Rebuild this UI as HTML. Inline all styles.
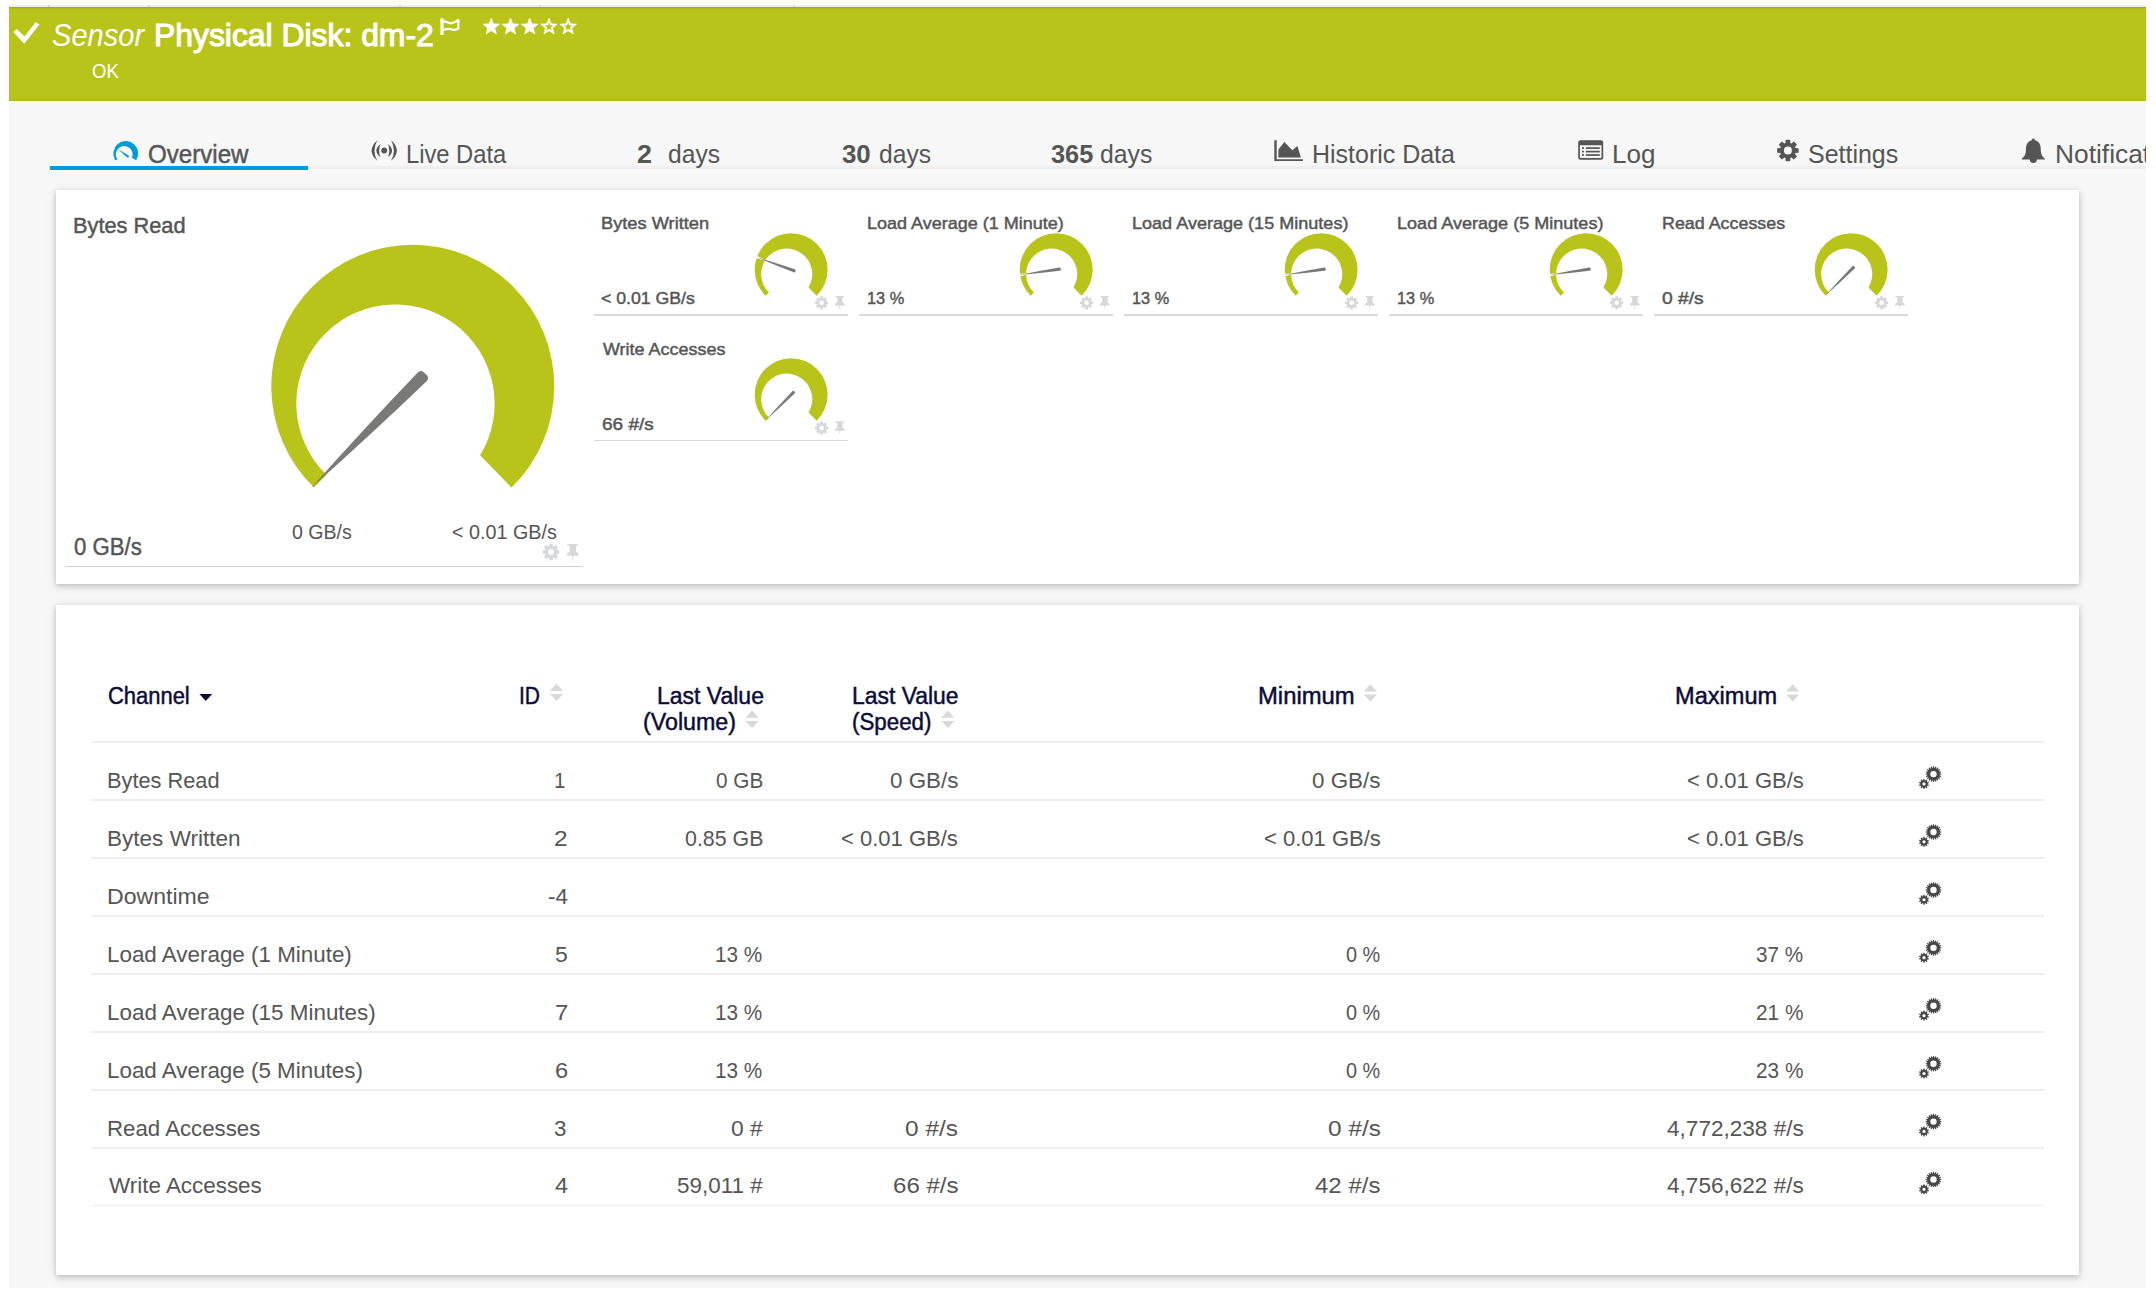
<!DOCTYPE html>
<html><head><meta charset="utf-8"><title>Sensor Physical Disk: dm-2</title>
<style>
html,body{margin:0;padding:0;background:#fff;}
body{width:2156px;height:1295px;position:relative;overflow:hidden;font-family:"Liberation Sans",sans-serif;}
#bg{position:absolute;left:9px;top:7px;width:2137px;height:1280.7px;background:#f7f7f7;}
#topline{position:absolute;left:9px;top:5px;width:2137px;height:2px;background:#f0f0f3;}
#hdr{position:absolute;left:9px;top:7px;width:2137px;height:94.3px;background:#b8c41a;box-shadow:inset 0 2px 2px -1px rgba(0,0,0,.18),inset 0 -1.4px 0 0 #b1be0e;}
#hwl{position:absolute;left:9px;top:102.0px;width:2137px;height:1.3px;background:#fcfcff;}
.tk{position:absolute;top:5px;width:2px;height:2px;background:#d9d9e6;}
#tabline{position:absolute;left:50px;top:166.3px;width:2096px;height:2.8px;background:#efefef;}
#tabsel{position:absolute;left:49.7px;top:166px;width:258.5px;height:3.7px;background:#009bda;}
.card{position:absolute;left:56.2px;width:2022.8px;background:#fff;box-shadow:0 2px 5px 0 rgba(0,0,0,.16),0 2px 10px 0 rgba(0,0,0,.12);}
#c1{top:189.8px;height:394px;}
#c2{top:604.8px;height:670.4px;}
.t{position:absolute;white-space:pre;line-height:1;transform-origin:0 0;}
.ul{position:absolute;height:1.9px;background:#d9dadc;}
.rl{position:absolute;left:91px;width:1953px;height:1.9px;background:#eeeeee;}
#hl{position:absolute;left:91px;width:1953px;top:741.0px;height:2px;background:#efefef;}
#clip{position:absolute;left:0;top:0;width:2146px;height:1295px;overflow:hidden;}
svg{position:absolute;left:0;top:0;}
</style></head><body>
<div id="bg"></div><div id="topline"></div><div id="hdr"></div><div id="hwl"></div>
<div class="tk" style="left:48px"></div><div class="tk" style="left:148px"></div><div class="tk" style="left:399px"></div><div class="tk" style="left:539px"></div><div class="tk" style="left:793px"></div>
<div id="tabline"></div><div id="tabsel"></div>
<div class="card" id="c1"></div><div class="card" id="c2"></div>
<div id="hl"></div>
<div class="ul" style="left:593.8px;top:314.0px;width:254.2px"></div>
<div class="ul" style="left:858.8px;top:314.0px;width:254.2px"></div>
<div class="ul" style="left:1123.8px;top:314.0px;width:254.2px"></div>
<div class="ul" style="left:1388.8px;top:314.0px;width:254.2px"></div>
<div class="ul" style="left:1653.8px;top:314.0px;width:254.2px"></div>
<div class="ul" style="left:593.8px;top:439.5px;width:254.2px"></div>
<div class="ul" style="left:65.0px;top:565.9px;width:517.9px;height:1.3px;background:#d0d1d3"></div>
<div class="rl" style="top:799.1px"></div>
<div class="rl" style="top:857.1px"></div>
<div class="rl" style="top:915.0px"></div>
<div class="rl" style="top:972.9px"></div>
<div class="rl" style="top:1030.8px"></div>
<div class="rl" style="top:1088.8px"></div>
<div class="rl" style="top:1146.7px"></div>
<div class="rl" style="top:1204.6px"></div>
<div id="clip">
<svg width="2146" height="1295" viewBox="0 0 2146 1295">
<path d="M13.3 31.9 L16.7 29.1 L24.5 36.5 L35.8 22.05 L39.5 24.6 L24.2 43.8 Z" fill="#fff"/>
<path d="M442.0 19.8 L442.0 34.9" stroke="#fff" stroke-width="3.2" fill="none" stroke-linecap="butt"/><circle cx="442" cy="19.9" r="1.9" fill="#fff"/>
<path d="M443.2 22.0 C446.5 20.6 448.6 23.8 451.8 23.2 C454.6 22.7 456.6 20.9 458.4 20.0 L458.4 28.4 C456.2 29.9 454.3 30.6 451.8 29.4 C448.8 28.0 446.4 28.8 443.2 30.0" fill="none" stroke="#fff" stroke-width="2.2" stroke-linejoin="round"/>
<path d="M491.20 18.20 L493.40 23.87 L499.47 24.21 L494.76 28.06 L496.31 33.94 L491.20 30.64 L486.09 33.94 L487.64 28.06 L482.93 24.21 L489.00 23.87Z" fill="#fff" stroke="#fff" stroke-width="0.7" stroke-linejoin="round"/>
<path d="M510.50 18.20 L512.70 23.87 L518.77 24.21 L514.06 28.06 L515.61 33.94 L510.50 30.64 L505.39 33.94 L506.94 28.06 L502.23 24.21 L508.30 23.87Z" fill="#fff" stroke="#fff" stroke-width="0.7" stroke-linejoin="round"/>
<path d="M529.70 18.20 L531.90 23.87 L537.97 24.21 L533.26 28.06 L534.81 33.94 L529.70 30.64 L524.59 33.94 L526.14 28.06 L521.43 24.21 L527.50 23.87Z" fill="#fff" stroke="#fff" stroke-width="0.7" stroke-linejoin="round"/>
<path d="M549.00 18.20 L551.20 23.87 L557.27 24.21 L552.56 28.06 L554.11 33.94 L549.00 30.64 L543.89 33.94 L545.44 28.06 L540.73 24.21 L546.80 23.87Z M549.00 21.47 L550.37 25.01 L554.16 25.22 L551.22 27.62 L552.19 31.29 L549.00 29.23 L545.81 31.29 L546.78 27.62 L543.84 25.22 L547.63 25.01Z" fill="#fff" fill-rule="evenodd" stroke="#fff" stroke-width="0.7" stroke-linejoin="round"/>
<path d="M568.20 18.20 L570.40 23.87 L576.47 24.21 L571.76 28.06 L573.31 33.94 L568.20 30.64 L563.09 33.94 L564.64 28.06 L559.93 24.21 L566.00 23.87Z M568.20 21.47 L569.57 25.01 L573.36 25.22 L570.42 27.62 L571.39 31.29 L568.20 29.23 L565.01 31.29 L565.98 27.62 L563.04 25.22 L566.83 25.01Z" fill="#fff" fill-rule="evenodd" stroke="#fff" stroke-width="0.7" stroke-linejoin="round"/>
<path d="M115.19 160.15 A12.45 12.45 0 1 1 136.19 160.33 L131.87 157.87 A8.4 8.4 0 1 0 117.40 159.39 Z" fill="#009bda"/>
<path d="M117.9 149.0 L128.6 155.4 A1.3 1.3 0 0 1 127.2 157.5 Z" fill="#009bda"/>
<circle cx="384.2" cy="150.5" r="2.9" fill="#555555"/>
<path d="M377.30 140.20 Q365.90 150.50 377.30 160.80 Q371.70 150.50 377.30 140.20Z" fill="#555555"/>
<path d="M380.40 143.90 Q372.30 150.50 380.40 157.10 Q377.86 150.50 380.40 143.90Z" fill="#555555"/>
<path d="M391.10 140.20 Q402.50 150.50 391.10 160.80 Q396.70 150.50 391.10 140.20Z" fill="#555555"/>
<path d="M388.00 143.90 Q396.10 150.50 388.00 157.10 Q390.54 150.50 388.00 143.90Z" fill="#555555"/>
<path d="M1274.3 140.2 H1276.7 V159.3 H1302.9 V160.9 H1274.3Z M1278.4 149.6 L1284.4 142 L1292.3 150.2 L1297.4 145.9 L1300.9 157.6 L1278.4 157.6Z" fill="#555555"/>
<path d="M1580.4 140.2 H1601 A2.2 2.2 0 0 1 1603.2 142.4 V157.5 A2.2 2.2 0 0 1 1601 159.7 H1580.4 A2.2 2.2 0 0 1 1578.2 157.5 V142.4 A2.2 2.2 0 0 1 1580.4 140.2Z M1579.9 145.3 V157.3 A0.8 0.8 0 0 0 1580.7 158.1 H1600.7 A0.8 0.8 0 0 0 1601.5 157.3 V145.3Z" fill="#555555" fill-rule="evenodd"/>
<rect x="1582" y="147.25" width="1.9" height="1.7" fill="#555555"/><rect x="1585.8" y="147.25" width="14" height="1.7" fill="#555555"/>
<rect x="1582" y="150.75" width="1.9" height="1.7" fill="#555555"/><rect x="1585.8" y="150.75" width="14" height="1.7" fill="#555555"/>
<rect x="1582" y="154.15" width="1.9" height="1.7" fill="#555555"/><rect x="1585.8" y="154.15" width="14" height="1.7" fill="#555555"/>
<path d="M1785.46 142.99 L1785.59 139.95 A10.80 10.80 0 0 1 1790.21 139.95 L1790.34 142.99 A7.90 7.90 0 0 1 1791.49 143.46 L1793.72 141.40 A10.80 10.80 0 0 1 1797.00 144.68 L1794.94 146.91 A7.90 7.90 0 0 1 1795.41 148.06 L1798.45 148.19 A10.80 10.80 0 0 1 1798.45 152.81 L1795.41 152.94 A7.90 7.90 0 0 1 1794.94 154.09 L1797.00 156.32 A10.80 10.80 0 0 1 1793.72 159.60 L1791.49 157.54 A7.90 7.90 0 0 1 1790.34 158.01 L1790.21 161.05 A10.80 10.80 0 0 1 1785.59 161.05 L1785.46 158.01 A7.90 7.90 0 0 1 1784.31 157.54 L1782.08 159.60 A10.80 10.80 0 0 1 1778.80 156.32 L1780.86 154.09 A7.90 7.90 0 0 1 1780.39 152.94 L1777.35 152.81 A10.80 10.80 0 0 1 1777.35 148.19 L1780.39 148.06 A7.90 7.90 0 0 1 1780.86 146.91 L1778.80 144.68 A10.80 10.80 0 0 1 1782.08 141.40 L1784.31 143.46 A7.90 7.90 0 0 1 1785.46 142.99Z M1791.90 150.50 A4.00 4.00 0 1 0 1783.90 150.50 A4.00 4.00 0 1 0 1791.90 150.50Z" fill="#555555" fill-rule="evenodd"/>
<path d="M2033.35 138.4 C2034.55 138.4 2034.9499999999998 139.4 2034.85 140.3 C2039.35 141.4 2040.75 145 2040.75 149 C2040.75 154 2041.9499999999998 156.4 2044.85 158.6 L2044.85 159.6 L2036.9499999999998 159.6 A3.6 3.4 0 0 1 2029.75 159.6 L2021.85 159.6 L2021.85 158.6 C2024.75 156.4 2025.9499999999998 154 2025.9499999999998 149 C2025.9499999999998 145 2027.35 141.4 2031.85 140.3 C2031.75 139.4 2032.1499999999999 138.4 2033.35 138.4Z" fill="#555555"/>
<path d="M313.92 487.57 A141.50 141.50 0 1 1 511.58 487.57 L480.07 455.28 A99.15 99.15 0 1 0 326.42 474.77 Z" fill="#b8c41a"/>
<path d="M310.57 488.48 Q372.23 433.46 426.36 381.53 Q429.76 378.13 426.57 374.95 L424.10 372.48 Q420.92 369.29 417.52 372.69 Q365.59 426.82 310.57 488.48 Z" fill="#797977"/>
<path d="M549.17 546.20 L549.28 543.89 A8.30 8.30 0 0 1 552.84 543.89 L552.95 546.20 A6.10 6.10 0 0 1 553.83 546.56 L555.53 545.01 A8.30 8.30 0 0 1 558.05 547.53 L556.50 549.23 A6.10 6.10 0 0 1 556.86 550.11 L559.17 550.22 A8.30 8.30 0 0 1 559.17 553.78 L556.86 553.89 A6.10 6.10 0 0 1 556.50 554.77 L558.05 556.47 A8.30 8.30 0 0 1 555.53 558.99 L553.83 557.44 A6.10 6.10 0 0 1 552.95 557.80 L552.84 560.11 A8.30 8.30 0 0 1 549.28 560.11 L549.17 557.80 A6.10 6.10 0 0 1 548.29 557.44 L546.59 558.99 A8.30 8.30 0 0 1 544.07 556.47 L545.62 554.77 A6.10 6.10 0 0 1 545.26 553.89 L542.95 553.78 A8.30 8.30 0 0 1 542.95 550.22 L545.26 550.11 A6.10 6.10 0 0 1 545.62 549.23 L544.07 547.53 A8.30 8.30 0 0 1 546.59 545.01 L548.29 546.56 A6.10 6.10 0 0 1 549.17 546.20Z M553.96 552.00 A2.90 2.90 0 1 0 548.16 552.00 A2.90 2.90 0 1 0 553.96 552.00Z" fill="#d7d8da" fill-rule="evenodd"/>
<path d="M567.20 544.10 L577.60 544.10 L577.60 545.60 L576.10 545.60 L576.10 551.70 C578.10 552.70 578.90 554.30 578.90 555.70 L573.40 555.70 L572.70 561.60 L572.00 555.70 L566.50 555.70 C566.50 554.30 567.30 552.70 569.60 551.70 L569.60 545.60 L567.20 545.60Z" fill="#d7d8da"/>
<path d="M765.67 295.81 A36.48 36.48 0 1 1 816.63 295.81 L808.50 287.48 A25.56 25.56 0 1 0 768.89 292.51 Z" fill="#b8c41a"/>
<path d="M754.33 257.81 L755.30 255.14 L768.00 260.94 L767.79 261.53Z" fill="#fff"/>
<path d="M756.14 256.96 Q775.72 265.37 793.75 272.36 Q794.91 272.78 795.31 271.69 L795.62 270.85 Q796.01 269.76 794.85 269.33 Q776.54 263.09 756.14 256.96 Z" fill="#797977"/>
<path d="M820.10 298.19 L820.19 296.35 A6.60 6.60 0 0 1 823.01 296.35 L823.10 298.19 A4.85 4.85 0 0 1 823.80 298.48 L825.16 297.24 A6.60 6.60 0 0 1 827.16 299.24 L825.92 300.60 A4.85 4.85 0 0 1 826.21 301.30 L828.05 301.39 A6.60 6.60 0 0 1 828.05 304.21 L826.21 304.30 A4.85 4.85 0 0 1 825.92 305.00 L827.16 306.36 A6.60 6.60 0 0 1 825.16 308.36 L823.80 307.12 A4.85 4.85 0 0 1 823.10 307.41 L823.01 309.25 A6.60 6.60 0 0 1 820.19 309.25 L820.10 307.41 A4.85 4.85 0 0 1 819.40 307.12 L818.04 308.36 A6.60 6.60 0 0 1 816.04 306.36 L817.28 305.00 A4.85 4.85 0 0 1 816.99 304.30 L815.15 304.21 A6.60 6.60 0 0 1 815.15 301.39 L816.99 301.30 A4.85 4.85 0 0 1 817.28 300.60 L816.04 299.24 A6.60 6.60 0 0 1 818.04 297.24 L819.40 298.48 A4.85 4.85 0 0 1 820.10 298.19Z M823.90 302.80 A2.30 2.30 0 1 0 819.30 302.80 A2.30 2.30 0 1 0 823.90 302.80Z" fill="#d7d8da" fill-rule="evenodd"/>
<path d="M835.27 296.00 L843.80 296.00 L843.80 297.23 L842.57 297.23 L842.57 302.23 C844.21 303.05 844.87 304.36 844.87 305.51 L840.36 305.51 L839.78 310.35 L839.21 305.51 L834.70 305.51 C834.70 304.36 835.36 303.05 837.24 302.23 L837.24 297.23 L835.27 297.23Z" fill="#d7d8da"/>
<path d="M1030.67 295.81 A36.48 36.48 0 1 1 1081.63 295.81 L1073.50 287.48 A25.56 25.56 0 1 0 1033.89 292.51 Z" fill="#b8c41a"/>
<path d="M1018.09 276.69 L1017.68 273.88 L1031.62 272.97 L1031.71 273.58Z" fill="#fff"/>
<path d="M1019.29 275.08 Q1040.51 273.21 1059.70 270.81 Q1060.92 270.63 1060.76 269.48 L1060.63 268.59 Q1060.46 267.44 1059.23 267.62 Q1040.16 270.81 1019.29 275.08 Z" fill="#797977"/>
<path d="M1085.10 298.19 L1085.19 296.35 A6.60 6.60 0 0 1 1088.01 296.35 L1088.10 298.19 A4.85 4.85 0 0 1 1088.80 298.48 L1090.16 297.24 A6.60 6.60 0 0 1 1092.16 299.24 L1090.92 300.60 A4.85 4.85 0 0 1 1091.21 301.30 L1093.05 301.39 A6.60 6.60 0 0 1 1093.05 304.21 L1091.21 304.30 A4.85 4.85 0 0 1 1090.92 305.00 L1092.16 306.36 A6.60 6.60 0 0 1 1090.16 308.36 L1088.80 307.12 A4.85 4.85 0 0 1 1088.10 307.41 L1088.01 309.25 A6.60 6.60 0 0 1 1085.19 309.25 L1085.10 307.41 A4.85 4.85 0 0 1 1084.40 307.12 L1083.04 308.36 A6.60 6.60 0 0 1 1081.04 306.36 L1082.28 305.00 A4.85 4.85 0 0 1 1081.99 304.30 L1080.15 304.21 A6.60 6.60 0 0 1 1080.15 301.39 L1081.99 301.30 A4.85 4.85 0 0 1 1082.28 300.60 L1081.04 299.24 A6.60 6.60 0 0 1 1083.04 297.24 L1084.40 298.48 A4.85 4.85 0 0 1 1085.10 298.19Z M1088.90 302.80 A2.30 2.30 0 1 0 1084.30 302.80 A2.30 2.30 0 1 0 1088.90 302.80Z" fill="#d7d8da" fill-rule="evenodd"/>
<path d="M1100.27 296.00 L1108.80 296.00 L1108.80 297.23 L1107.57 297.23 L1107.57 302.23 C1109.21 303.05 1109.87 304.36 1109.87 305.51 L1105.36 305.51 L1104.78 310.35 L1104.21 305.51 L1099.70 305.51 C1099.70 304.36 1100.36 303.05 1102.24 302.23 L1102.24 297.23 L1100.27 297.23Z" fill="#d7d8da"/>
<path d="M1295.67 295.81 A36.48 36.48 0 1 1 1346.63 295.81 L1338.50 287.48 A25.56 25.56 0 1 0 1298.89 292.51 Z" fill="#b8c41a"/>
<path d="M1283.09 276.69 L1282.68 273.88 L1296.62 272.97 L1296.71 273.58Z" fill="#fff"/>
<path d="M1284.29 275.08 Q1305.51 273.21 1324.70 270.81 Q1325.92 270.63 1325.76 269.48 L1325.63 268.59 Q1325.46 267.44 1324.23 267.62 Q1305.16 270.81 1284.29 275.08 Z" fill="#797977"/>
<path d="M1350.10 298.19 L1350.19 296.35 A6.60 6.60 0 0 1 1353.01 296.35 L1353.10 298.19 A4.85 4.85 0 0 1 1353.80 298.48 L1355.16 297.24 A6.60 6.60 0 0 1 1357.16 299.24 L1355.92 300.60 A4.85 4.85 0 0 1 1356.21 301.30 L1358.05 301.39 A6.60 6.60 0 0 1 1358.05 304.21 L1356.21 304.30 A4.85 4.85 0 0 1 1355.92 305.00 L1357.16 306.36 A6.60 6.60 0 0 1 1355.16 308.36 L1353.80 307.12 A4.85 4.85 0 0 1 1353.10 307.41 L1353.01 309.25 A6.60 6.60 0 0 1 1350.19 309.25 L1350.10 307.41 A4.85 4.85 0 0 1 1349.40 307.12 L1348.04 308.36 A6.60 6.60 0 0 1 1346.04 306.36 L1347.28 305.00 A4.85 4.85 0 0 1 1346.99 304.30 L1345.15 304.21 A6.60 6.60 0 0 1 1345.15 301.39 L1346.99 301.30 A4.85 4.85 0 0 1 1347.28 300.60 L1346.04 299.24 A6.60 6.60 0 0 1 1348.04 297.24 L1349.40 298.48 A4.85 4.85 0 0 1 1350.10 298.19Z M1353.90 302.80 A2.30 2.30 0 1 0 1349.30 302.80 A2.30 2.30 0 1 0 1353.90 302.80Z" fill="#d7d8da" fill-rule="evenodd"/>
<path d="M1365.27 296.00 L1373.80 296.00 L1373.80 297.23 L1372.57 297.23 L1372.57 302.23 C1374.21 303.05 1374.87 304.36 1374.87 305.51 L1370.36 305.51 L1369.78 310.35 L1369.21 305.51 L1364.70 305.51 C1364.70 304.36 1365.36 303.05 1367.24 302.23 L1367.24 297.23 L1365.27 297.23Z" fill="#d7d8da"/>
<path d="M1560.67 295.81 A36.48 36.48 0 1 1 1611.63 295.81 L1603.50 287.48 A25.56 25.56 0 1 0 1563.89 292.51 Z" fill="#b8c41a"/>
<path d="M1548.09 276.69 L1547.68 273.88 L1561.62 272.97 L1561.71 273.58Z" fill="#fff"/>
<path d="M1549.29 275.08 Q1570.51 273.21 1589.70 270.81 Q1590.92 270.63 1590.76 269.48 L1590.63 268.59 Q1590.46 267.44 1589.23 267.62 Q1570.16 270.81 1549.29 275.08 Z" fill="#797977"/>
<path d="M1615.10 298.19 L1615.19 296.35 A6.60 6.60 0 0 1 1618.01 296.35 L1618.10 298.19 A4.85 4.85 0 0 1 1618.80 298.48 L1620.16 297.24 A6.60 6.60 0 0 1 1622.16 299.24 L1620.92 300.60 A4.85 4.85 0 0 1 1621.21 301.30 L1623.05 301.39 A6.60 6.60 0 0 1 1623.05 304.21 L1621.21 304.30 A4.85 4.85 0 0 1 1620.92 305.00 L1622.16 306.36 A6.60 6.60 0 0 1 1620.16 308.36 L1618.80 307.12 A4.85 4.85 0 0 1 1618.10 307.41 L1618.01 309.25 A6.60 6.60 0 0 1 1615.19 309.25 L1615.10 307.41 A4.85 4.85 0 0 1 1614.40 307.12 L1613.04 308.36 A6.60 6.60 0 0 1 1611.04 306.36 L1612.28 305.00 A4.85 4.85 0 0 1 1611.99 304.30 L1610.15 304.21 A6.60 6.60 0 0 1 1610.15 301.39 L1611.99 301.30 A4.85 4.85 0 0 1 1612.28 300.60 L1611.04 299.24 A6.60 6.60 0 0 1 1613.04 297.24 L1614.40 298.48 A4.85 4.85 0 0 1 1615.10 298.19Z M1618.90 302.80 A2.30 2.30 0 1 0 1614.30 302.80 A2.30 2.30 0 1 0 1618.90 302.80Z" fill="#d7d8da" fill-rule="evenodd"/>
<path d="M1630.27 296.00 L1638.80 296.00 L1638.80 297.23 L1637.57 297.23 L1637.57 302.23 C1639.21 303.05 1639.87 304.36 1639.87 305.51 L1635.36 305.51 L1634.78 310.35 L1634.21 305.51 L1629.70 305.51 C1629.70 304.36 1630.36 303.05 1632.24 302.23 L1632.24 297.23 L1630.27 297.23Z" fill="#d7d8da"/>
<path d="M1825.67 295.81 A36.48 36.48 0 1 1 1876.63 295.81 L1868.50 287.48 A25.56 25.56 0 1 0 1828.89 292.51 Z" fill="#b8c41a"/>
<path d="M1824.81 296.04 Q1840.70 281.86 1854.66 268.47 Q1855.53 267.59 1854.71 266.77 L1854.08 266.14 Q1853.26 265.32 1852.38 266.19 Q1838.99 280.15 1824.81 296.04 Z" fill="#797977"/>
<path d="M1880.10 298.19 L1880.19 296.35 A6.60 6.60 0 0 1 1883.01 296.35 L1883.10 298.19 A4.85 4.85 0 0 1 1883.80 298.48 L1885.16 297.24 A6.60 6.60 0 0 1 1887.16 299.24 L1885.92 300.60 A4.85 4.85 0 0 1 1886.21 301.30 L1888.05 301.39 A6.60 6.60 0 0 1 1888.05 304.21 L1886.21 304.30 A4.85 4.85 0 0 1 1885.92 305.00 L1887.16 306.36 A6.60 6.60 0 0 1 1885.16 308.36 L1883.80 307.12 A4.85 4.85 0 0 1 1883.10 307.41 L1883.01 309.25 A6.60 6.60 0 0 1 1880.19 309.25 L1880.10 307.41 A4.85 4.85 0 0 1 1879.40 307.12 L1878.04 308.36 A6.60 6.60 0 0 1 1876.04 306.36 L1877.28 305.00 A4.85 4.85 0 0 1 1876.99 304.30 L1875.15 304.21 A6.60 6.60 0 0 1 1875.15 301.39 L1876.99 301.30 A4.85 4.85 0 0 1 1877.28 300.60 L1876.04 299.24 A6.60 6.60 0 0 1 1878.04 297.24 L1879.40 298.48 A4.85 4.85 0 0 1 1880.10 298.19Z M1883.90 302.80 A2.30 2.30 0 1 0 1879.30 302.80 A2.30 2.30 0 1 0 1883.90 302.80Z" fill="#d7d8da" fill-rule="evenodd"/>
<path d="M1895.27 296.00 L1903.80 296.00 L1903.80 297.23 L1902.57 297.23 L1902.57 302.23 C1904.21 303.05 1904.87 304.36 1904.87 305.51 L1900.36 305.51 L1899.78 310.35 L1899.21 305.51 L1894.70 305.51 C1894.70 304.36 1895.36 303.05 1897.24 302.23 L1897.24 297.23 L1895.27 297.23Z" fill="#d7d8da"/>
<path d="M765.67 420.81 A36.48 36.48 0 1 1 816.63 420.81 L808.50 412.48 A25.56 25.56 0 1 0 768.89 417.51 Z" fill="#b8c41a"/>
<path d="M764.81 421.04 Q780.70 406.86 794.66 393.47 Q795.53 392.59 794.71 391.77 L794.08 391.14 Q793.26 390.32 792.38 391.19 Q778.99 405.15 764.81 421.04 Z" fill="#797977"/>
<path d="M820.10 423.54 L820.19 421.70 A6.60 6.60 0 0 1 823.01 421.70 L823.10 423.54 A4.85 4.85 0 0 1 823.80 423.83 L825.16 422.59 A6.60 6.60 0 0 1 827.16 424.59 L825.92 425.95 A4.85 4.85 0 0 1 826.21 426.65 L828.05 426.74 A6.60 6.60 0 0 1 828.05 429.56 L826.21 429.65 A4.85 4.85 0 0 1 825.92 430.35 L827.16 431.71 A6.60 6.60 0 0 1 825.16 433.71 L823.80 432.47 A4.85 4.85 0 0 1 823.10 432.76 L823.01 434.60 A6.60 6.60 0 0 1 820.19 434.60 L820.10 432.76 A4.85 4.85 0 0 1 819.40 432.47 L818.04 433.71 A6.60 6.60 0 0 1 816.04 431.71 L817.28 430.35 A4.85 4.85 0 0 1 816.99 429.65 L815.15 429.56 A6.60 6.60 0 0 1 815.15 426.74 L816.99 426.65 A4.85 4.85 0 0 1 817.28 425.95 L816.04 424.59 A6.60 6.60 0 0 1 818.04 422.59 L819.40 423.83 A4.85 4.85 0 0 1 820.10 423.54Z M823.90 428.15 A2.30 2.30 0 1 0 819.30 428.15 A2.30 2.30 0 1 0 823.90 428.15Z" fill="#d7d8da" fill-rule="evenodd"/>
<path d="M835.27 421.35 L843.80 421.35 L843.80 422.58 L842.57 422.58 L842.57 427.58 C844.21 428.40 844.87 429.71 844.87 430.86 L840.36 430.86 L839.78 435.70 L839.21 430.86 L834.70 430.86 C834.70 429.71 835.36 428.40 837.24 427.58 L837.24 422.58 L835.27 422.58Z" fill="#d7d8da"/>
<path d="M199.4 694.1 L212.2 694.1 L205.8 701.1Z" fill="#0b0b38"/>
<path d="M550.00 691.00 L556.55 683.70 L563.10 691.00Z M550.00 694.10 L563.10 694.10 L556.55 701.10Z" fill="#d7d8da"/>
<path d="M745.50 717.80 L752.05 710.50 L758.60 717.80Z M745.50 720.90 L758.60 720.90 L752.05 727.90Z" fill="#d7d8da"/>
<path d="M941.30 717.80 L947.85 710.50 L954.40 717.80Z M941.30 720.90 L954.40 720.90 L947.85 727.90Z" fill="#d7d8da"/>
<path d="M1363.80 691.50 L1370.35 684.20 L1376.90 691.50Z M1363.80 694.60 L1376.90 694.60 L1370.35 701.60Z" fill="#d7d8da"/>
<path d="M1786.20 691.50 L1792.75 684.20 L1799.30 691.50Z M1786.20 694.60 L1799.30 694.60 L1792.75 701.60Z" fill="#d7d8da"/>
<path d="M1932.74 767.95 L1932.99 766.32 A7.80 7.80 0 0 1 1934.01 766.32 L1934.26 767.95 A6.20 6.20 0 0 1 1934.68 768.01 L1935.42 766.54 A7.80 7.80 0 0 1 1936.39 766.86 L1936.12 768.48 A6.20 6.20 0 0 1 1936.50 768.68 L1937.66 767.50 A7.80 7.80 0 0 1 1938.49 768.11 L1937.73 769.57 A6.20 6.20 0 0 1 1938.03 769.87 L1939.49 769.11 A7.80 7.80 0 0 1 1940.10 769.94 L1938.92 771.10 A6.20 6.20 0 0 1 1939.12 771.48 L1940.74 771.21 A7.80 7.80 0 0 1 1941.06 772.18 L1939.59 772.92 A6.20 6.20 0 0 1 1939.65 773.34 L1941.28 773.59 A7.80 7.80 0 0 1 1941.28 774.61 L1939.65 774.86 A6.20 6.20 0 0 1 1939.59 775.28 L1941.06 776.02 A7.80 7.80 0 0 1 1940.74 776.99 L1939.12 776.72 A6.20 6.20 0 0 1 1938.92 777.10 L1940.10 778.26 A7.80 7.80 0 0 1 1939.49 779.09 L1938.03 778.33 A6.20 6.20 0 0 1 1937.73 778.63 L1938.49 780.09 A7.80 7.80 0 0 1 1937.66 780.70 L1936.50 779.52 A6.20 6.20 0 0 1 1936.12 779.72 L1936.39 781.34 A7.80 7.80 0 0 1 1935.42 781.66 L1934.68 780.19 A6.20 6.20 0 0 1 1934.26 780.25 L1934.01 781.88 A7.80 7.80 0 0 1 1932.99 781.88 L1932.74 780.25 A6.20 6.20 0 0 1 1932.32 780.19 L1931.58 781.66 A7.80 7.80 0 0 1 1930.61 781.34 L1930.88 779.72 A6.20 6.20 0 0 1 1930.50 779.52 L1929.34 780.70 A7.80 7.80 0 0 1 1928.51 780.09 L1929.27 778.63 A6.20 6.20 0 0 1 1928.97 778.33 L1927.51 779.09 A7.80 7.80 0 0 1 1926.90 778.26 L1928.08 777.10 A6.20 6.20 0 0 1 1927.88 776.72 L1926.26 776.99 A7.80 7.80 0 0 1 1925.94 776.02 L1927.41 775.28 A6.20 6.20 0 0 1 1927.35 774.86 L1925.72 774.61 A7.80 7.80 0 0 1 1925.72 773.59 L1927.35 773.34 A6.20 6.20 0 0 1 1927.41 772.92 L1925.94 772.18 A7.80 7.80 0 0 1 1926.26 771.21 L1927.88 771.48 A6.20 6.20 0 0 1 1928.08 771.10 L1926.90 769.94 A7.80 7.80 0 0 1 1927.51 769.11 L1928.97 769.87 A6.20 6.20 0 0 1 1929.27 769.57 L1928.51 768.11 A7.80 7.80 0 0 1 1929.34 767.50 L1930.50 768.68 A6.20 6.20 0 0 1 1930.88 768.48 L1930.61 766.86 A7.80 7.80 0 0 1 1931.58 766.54 L1932.32 768.01 A6.20 6.20 0 0 1 1932.74 767.95Z M1936.70 774.10 A3.20 3.20 0 1 0 1930.30 774.10 A3.20 3.20 0 1 0 1936.70 774.10Z" fill="#474747" fill-rule="evenodd"/>
<path d="M1923.13 780.41 L1923.37 778.94 A5.00 5.00 0 0 1 1924.63 778.94 L1924.87 780.41 A3.60 3.60 0 0 1 1925.35 780.56 L1926.41 779.52 A5.00 5.00 0 0 1 1927.42 780.26 L1926.76 781.59 A3.60 3.60 0 0 1 1927.05 781.99 L1928.52 781.77 A5.00 5.00 0 0 1 1928.91 782.96 L1927.59 783.65 A3.60 3.60 0 0 1 1927.59 784.15 L1928.91 784.84 A5.00 5.00 0 0 1 1928.52 786.03 L1927.05 785.81 A3.60 3.60 0 0 1 1926.76 786.21 L1927.42 787.54 A5.00 5.00 0 0 1 1926.41 788.28 L1925.35 787.24 A3.60 3.60 0 0 1 1924.87 787.39 L1924.63 788.86 A5.00 5.00 0 0 1 1923.37 788.86 L1923.13 787.39 A3.60 3.60 0 0 1 1922.65 787.24 L1921.59 788.28 A5.00 5.00 0 0 1 1920.58 787.54 L1921.24 786.21 A3.60 3.60 0 0 1 1920.95 785.81 L1919.48 786.03 A5.00 5.00 0 0 1 1919.09 784.84 L1920.41 784.15 A3.60 3.60 0 0 1 1920.41 783.65 L1919.09 782.96 A5.00 5.00 0 0 1 1919.48 781.77 L1920.95 781.99 A3.60 3.60 0 0 1 1921.24 781.59 L1920.58 780.26 A5.00 5.00 0 0 1 1921.59 779.52 L1922.65 780.56 A3.60 3.60 0 0 1 1923.13 780.41Z M1925.60 783.90 A1.60 1.60 0 1 0 1922.40 783.90 A1.60 1.60 0 1 0 1925.60 783.90Z" fill="#474747" fill-rule="evenodd"/>
<path d="M1932.74 825.87 L1932.99 824.24 A7.80 7.80 0 0 1 1934.01 824.24 L1934.26 825.87 A6.20 6.20 0 0 1 1934.68 825.93 L1935.42 824.46 A7.80 7.80 0 0 1 1936.39 824.78 L1936.12 826.40 A6.20 6.20 0 0 1 1936.50 826.60 L1937.66 825.42 A7.80 7.80 0 0 1 1938.49 826.03 L1937.73 827.49 A6.20 6.20 0 0 1 1938.03 827.79 L1939.49 827.03 A7.80 7.80 0 0 1 1940.10 827.86 L1938.92 829.02 A6.20 6.20 0 0 1 1939.12 829.40 L1940.74 829.13 A7.80 7.80 0 0 1 1941.06 830.10 L1939.59 830.84 A6.20 6.20 0 0 1 1939.65 831.26 L1941.28 831.51 A7.80 7.80 0 0 1 1941.28 832.53 L1939.65 832.78 A6.20 6.20 0 0 1 1939.59 833.20 L1941.06 833.94 A7.80 7.80 0 0 1 1940.74 834.91 L1939.12 834.64 A6.20 6.20 0 0 1 1938.92 835.02 L1940.10 836.18 A7.80 7.80 0 0 1 1939.49 837.01 L1938.03 836.25 A6.20 6.20 0 0 1 1937.73 836.55 L1938.49 838.01 A7.80 7.80 0 0 1 1937.66 838.62 L1936.50 837.44 A6.20 6.20 0 0 1 1936.12 837.64 L1936.39 839.26 A7.80 7.80 0 0 1 1935.42 839.58 L1934.68 838.11 A6.20 6.20 0 0 1 1934.26 838.17 L1934.01 839.80 A7.80 7.80 0 0 1 1932.99 839.80 L1932.74 838.17 A6.20 6.20 0 0 1 1932.32 838.11 L1931.58 839.58 A7.80 7.80 0 0 1 1930.61 839.26 L1930.88 837.64 A6.20 6.20 0 0 1 1930.50 837.44 L1929.34 838.62 A7.80 7.80 0 0 1 1928.51 838.01 L1929.27 836.55 A6.20 6.20 0 0 1 1928.97 836.25 L1927.51 837.01 A7.80 7.80 0 0 1 1926.90 836.18 L1928.08 835.02 A6.20 6.20 0 0 1 1927.88 834.64 L1926.26 834.91 A7.80 7.80 0 0 1 1925.94 833.94 L1927.41 833.20 A6.20 6.20 0 0 1 1927.35 832.78 L1925.72 832.53 A7.80 7.80 0 0 1 1925.72 831.51 L1927.35 831.26 A6.20 6.20 0 0 1 1927.41 830.84 L1925.94 830.10 A7.80 7.80 0 0 1 1926.26 829.13 L1927.88 829.40 A6.20 6.20 0 0 1 1928.08 829.02 L1926.90 827.86 A7.80 7.80 0 0 1 1927.51 827.03 L1928.97 827.79 A6.20 6.20 0 0 1 1929.27 827.49 L1928.51 826.03 A7.80 7.80 0 0 1 1929.34 825.42 L1930.50 826.60 A6.20 6.20 0 0 1 1930.88 826.40 L1930.61 824.78 A7.80 7.80 0 0 1 1931.58 824.46 L1932.32 825.93 A6.20 6.20 0 0 1 1932.74 825.87Z M1936.70 832.02 A3.20 3.20 0 1 0 1930.30 832.02 A3.20 3.20 0 1 0 1936.70 832.02Z" fill="#474747" fill-rule="evenodd"/>
<path d="M1923.13 838.33 L1923.37 836.86 A5.00 5.00 0 0 1 1924.63 836.86 L1924.87 838.33 A3.60 3.60 0 0 1 1925.35 838.48 L1926.41 837.44 A5.00 5.00 0 0 1 1927.42 838.18 L1926.76 839.51 A3.60 3.60 0 0 1 1927.05 839.91 L1928.52 839.69 A5.00 5.00 0 0 1 1928.91 840.88 L1927.59 841.57 A3.60 3.60 0 0 1 1927.59 842.07 L1928.91 842.76 A5.00 5.00 0 0 1 1928.52 843.95 L1927.05 843.73 A3.60 3.60 0 0 1 1926.76 844.13 L1927.42 845.46 A5.00 5.00 0 0 1 1926.41 846.20 L1925.35 845.16 A3.60 3.60 0 0 1 1924.87 845.31 L1924.63 846.78 A5.00 5.00 0 0 1 1923.37 846.78 L1923.13 845.31 A3.60 3.60 0 0 1 1922.65 845.16 L1921.59 846.20 A5.00 5.00 0 0 1 1920.58 845.46 L1921.24 844.13 A3.60 3.60 0 0 1 1920.95 843.73 L1919.48 843.95 A5.00 5.00 0 0 1 1919.09 842.76 L1920.41 842.07 A3.60 3.60 0 0 1 1920.41 841.57 L1919.09 840.88 A5.00 5.00 0 0 1 1919.48 839.69 L1920.95 839.91 A3.60 3.60 0 0 1 1921.24 839.51 L1920.58 838.18 A5.00 5.00 0 0 1 1921.59 837.44 L1922.65 838.48 A3.60 3.60 0 0 1 1923.13 838.33Z M1925.60 841.82 A1.60 1.60 0 1 0 1922.40 841.82 A1.60 1.60 0 1 0 1925.60 841.82Z" fill="#474747" fill-rule="evenodd"/>
<path d="M1932.74 883.79 L1932.99 882.16 A7.80 7.80 0 0 1 1934.01 882.16 L1934.26 883.79 A6.20 6.20 0 0 1 1934.68 883.85 L1935.42 882.38 A7.80 7.80 0 0 1 1936.39 882.70 L1936.12 884.32 A6.20 6.20 0 0 1 1936.50 884.52 L1937.66 883.34 A7.80 7.80 0 0 1 1938.49 883.95 L1937.73 885.41 A6.20 6.20 0 0 1 1938.03 885.71 L1939.49 884.95 A7.80 7.80 0 0 1 1940.10 885.78 L1938.92 886.94 A6.20 6.20 0 0 1 1939.12 887.32 L1940.74 887.05 A7.80 7.80 0 0 1 1941.06 888.02 L1939.59 888.76 A6.20 6.20 0 0 1 1939.65 889.18 L1941.28 889.43 A7.80 7.80 0 0 1 1941.28 890.45 L1939.65 890.70 A6.20 6.20 0 0 1 1939.59 891.12 L1941.06 891.86 A7.80 7.80 0 0 1 1940.74 892.83 L1939.12 892.56 A6.20 6.20 0 0 1 1938.92 892.94 L1940.10 894.10 A7.80 7.80 0 0 1 1939.49 894.93 L1938.03 894.17 A6.20 6.20 0 0 1 1937.73 894.47 L1938.49 895.93 A7.80 7.80 0 0 1 1937.66 896.54 L1936.50 895.36 A6.20 6.20 0 0 1 1936.12 895.56 L1936.39 897.18 A7.80 7.80 0 0 1 1935.42 897.50 L1934.68 896.03 A6.20 6.20 0 0 1 1934.26 896.09 L1934.01 897.72 A7.80 7.80 0 0 1 1932.99 897.72 L1932.74 896.09 A6.20 6.20 0 0 1 1932.32 896.03 L1931.58 897.50 A7.80 7.80 0 0 1 1930.61 897.18 L1930.88 895.56 A6.20 6.20 0 0 1 1930.50 895.36 L1929.34 896.54 A7.80 7.80 0 0 1 1928.51 895.93 L1929.27 894.47 A6.20 6.20 0 0 1 1928.97 894.17 L1927.51 894.93 A7.80 7.80 0 0 1 1926.90 894.10 L1928.08 892.94 A6.20 6.20 0 0 1 1927.88 892.56 L1926.26 892.83 A7.80 7.80 0 0 1 1925.94 891.86 L1927.41 891.12 A6.20 6.20 0 0 1 1927.35 890.70 L1925.72 890.45 A7.80 7.80 0 0 1 1925.72 889.43 L1927.35 889.18 A6.20 6.20 0 0 1 1927.41 888.76 L1925.94 888.02 A7.80 7.80 0 0 1 1926.26 887.05 L1927.88 887.32 A6.20 6.20 0 0 1 1928.08 886.94 L1926.90 885.78 A7.80 7.80 0 0 1 1927.51 884.95 L1928.97 885.71 A6.20 6.20 0 0 1 1929.27 885.41 L1928.51 883.95 A7.80 7.80 0 0 1 1929.34 883.34 L1930.50 884.52 A6.20 6.20 0 0 1 1930.88 884.32 L1930.61 882.70 A7.80 7.80 0 0 1 1931.58 882.38 L1932.32 883.85 A6.20 6.20 0 0 1 1932.74 883.79Z M1936.70 889.94 A3.20 3.20 0 1 0 1930.30 889.94 A3.20 3.20 0 1 0 1936.70 889.94Z" fill="#474747" fill-rule="evenodd"/>
<path d="M1923.13 896.25 L1923.37 894.78 A5.00 5.00 0 0 1 1924.63 894.78 L1924.87 896.25 A3.60 3.60 0 0 1 1925.35 896.40 L1926.41 895.36 A5.00 5.00 0 0 1 1927.42 896.10 L1926.76 897.43 A3.60 3.60 0 0 1 1927.05 897.83 L1928.52 897.61 A5.00 5.00 0 0 1 1928.91 898.80 L1927.59 899.49 A3.60 3.60 0 0 1 1927.59 899.99 L1928.91 900.68 A5.00 5.00 0 0 1 1928.52 901.87 L1927.05 901.65 A3.60 3.60 0 0 1 1926.76 902.05 L1927.42 903.38 A5.00 5.00 0 0 1 1926.41 904.12 L1925.35 903.08 A3.60 3.60 0 0 1 1924.87 903.23 L1924.63 904.70 A5.00 5.00 0 0 1 1923.37 904.70 L1923.13 903.23 A3.60 3.60 0 0 1 1922.65 903.08 L1921.59 904.12 A5.00 5.00 0 0 1 1920.58 903.38 L1921.24 902.05 A3.60 3.60 0 0 1 1920.95 901.65 L1919.48 901.87 A5.00 5.00 0 0 1 1919.09 900.68 L1920.41 899.99 A3.60 3.60 0 0 1 1920.41 899.49 L1919.09 898.80 A5.00 5.00 0 0 1 1919.48 897.61 L1920.95 897.83 A3.60 3.60 0 0 1 1921.24 897.43 L1920.58 896.10 A5.00 5.00 0 0 1 1921.59 895.36 L1922.65 896.40 A3.60 3.60 0 0 1 1923.13 896.25Z M1925.60 899.74 A1.60 1.60 0 1 0 1922.40 899.74 A1.60 1.60 0 1 0 1925.60 899.74Z" fill="#474747" fill-rule="evenodd"/>
<path d="M1932.74 941.71 L1932.99 940.08 A7.80 7.80 0 0 1 1934.01 940.08 L1934.26 941.71 A6.20 6.20 0 0 1 1934.68 941.77 L1935.42 940.30 A7.80 7.80 0 0 1 1936.39 940.62 L1936.12 942.24 A6.20 6.20 0 0 1 1936.50 942.44 L1937.66 941.26 A7.80 7.80 0 0 1 1938.49 941.87 L1937.73 943.33 A6.20 6.20 0 0 1 1938.03 943.63 L1939.49 942.87 A7.80 7.80 0 0 1 1940.10 943.70 L1938.92 944.86 A6.20 6.20 0 0 1 1939.12 945.24 L1940.74 944.97 A7.80 7.80 0 0 1 1941.06 945.94 L1939.59 946.68 A6.20 6.20 0 0 1 1939.65 947.10 L1941.28 947.35 A7.80 7.80 0 0 1 1941.28 948.37 L1939.65 948.62 A6.20 6.20 0 0 1 1939.59 949.04 L1941.06 949.78 A7.80 7.80 0 0 1 1940.74 950.75 L1939.12 950.48 A6.20 6.20 0 0 1 1938.92 950.86 L1940.10 952.02 A7.80 7.80 0 0 1 1939.49 952.85 L1938.03 952.09 A6.20 6.20 0 0 1 1937.73 952.39 L1938.49 953.85 A7.80 7.80 0 0 1 1937.66 954.46 L1936.50 953.28 A6.20 6.20 0 0 1 1936.12 953.48 L1936.39 955.10 A7.80 7.80 0 0 1 1935.42 955.42 L1934.68 953.95 A6.20 6.20 0 0 1 1934.26 954.01 L1934.01 955.64 A7.80 7.80 0 0 1 1932.99 955.64 L1932.74 954.01 A6.20 6.20 0 0 1 1932.32 953.95 L1931.58 955.42 A7.80 7.80 0 0 1 1930.61 955.10 L1930.88 953.48 A6.20 6.20 0 0 1 1930.50 953.28 L1929.34 954.46 A7.80 7.80 0 0 1 1928.51 953.85 L1929.27 952.39 A6.20 6.20 0 0 1 1928.97 952.09 L1927.51 952.85 A7.80 7.80 0 0 1 1926.90 952.02 L1928.08 950.86 A6.20 6.20 0 0 1 1927.88 950.48 L1926.26 950.75 A7.80 7.80 0 0 1 1925.94 949.78 L1927.41 949.04 A6.20 6.20 0 0 1 1927.35 948.62 L1925.72 948.37 A7.80 7.80 0 0 1 1925.72 947.35 L1927.35 947.10 A6.20 6.20 0 0 1 1927.41 946.68 L1925.94 945.94 A7.80 7.80 0 0 1 1926.26 944.97 L1927.88 945.24 A6.20 6.20 0 0 1 1928.08 944.86 L1926.90 943.70 A7.80 7.80 0 0 1 1927.51 942.87 L1928.97 943.63 A6.20 6.20 0 0 1 1929.27 943.33 L1928.51 941.87 A7.80 7.80 0 0 1 1929.34 941.26 L1930.50 942.44 A6.20 6.20 0 0 1 1930.88 942.24 L1930.61 940.62 A7.80 7.80 0 0 1 1931.58 940.30 L1932.32 941.77 A6.20 6.20 0 0 1 1932.74 941.71Z M1936.70 947.86 A3.20 3.20 0 1 0 1930.30 947.86 A3.20 3.20 0 1 0 1936.70 947.86Z" fill="#474747" fill-rule="evenodd"/>
<path d="M1923.13 954.17 L1923.37 952.70 A5.00 5.00 0 0 1 1924.63 952.70 L1924.87 954.17 A3.60 3.60 0 0 1 1925.35 954.32 L1926.41 953.28 A5.00 5.00 0 0 1 1927.42 954.02 L1926.76 955.35 A3.60 3.60 0 0 1 1927.05 955.75 L1928.52 955.53 A5.00 5.00 0 0 1 1928.91 956.72 L1927.59 957.41 A3.60 3.60 0 0 1 1927.59 957.91 L1928.91 958.60 A5.00 5.00 0 0 1 1928.52 959.79 L1927.05 959.57 A3.60 3.60 0 0 1 1926.76 959.97 L1927.42 961.30 A5.00 5.00 0 0 1 1926.41 962.04 L1925.35 961.00 A3.60 3.60 0 0 1 1924.87 961.15 L1924.63 962.62 A5.00 5.00 0 0 1 1923.37 962.62 L1923.13 961.15 A3.60 3.60 0 0 1 1922.65 961.00 L1921.59 962.04 A5.00 5.00 0 0 1 1920.58 961.30 L1921.24 959.97 A3.60 3.60 0 0 1 1920.95 959.57 L1919.48 959.79 A5.00 5.00 0 0 1 1919.09 958.60 L1920.41 957.91 A3.60 3.60 0 0 1 1920.41 957.41 L1919.09 956.72 A5.00 5.00 0 0 1 1919.48 955.53 L1920.95 955.75 A3.60 3.60 0 0 1 1921.24 955.35 L1920.58 954.02 A5.00 5.00 0 0 1 1921.59 953.28 L1922.65 954.32 A3.60 3.60 0 0 1 1923.13 954.17Z M1925.60 957.66 A1.60 1.60 0 1 0 1922.40 957.66 A1.60 1.60 0 1 0 1925.60 957.66Z" fill="#474747" fill-rule="evenodd"/>
<path d="M1932.74 999.63 L1932.99 998.00 A7.80 7.80 0 0 1 1934.01 998.00 L1934.26 999.63 A6.20 6.20 0 0 1 1934.68 999.69 L1935.42 998.22 A7.80 7.80 0 0 1 1936.39 998.54 L1936.12 1000.16 A6.20 6.20 0 0 1 1936.50 1000.36 L1937.66 999.18 A7.80 7.80 0 0 1 1938.49 999.79 L1937.73 1001.25 A6.20 6.20 0 0 1 1938.03 1001.55 L1939.49 1000.79 A7.80 7.80 0 0 1 1940.10 1001.62 L1938.92 1002.78 A6.20 6.20 0 0 1 1939.12 1003.16 L1940.74 1002.89 A7.80 7.80 0 0 1 1941.06 1003.86 L1939.59 1004.60 A6.20 6.20 0 0 1 1939.65 1005.02 L1941.28 1005.27 A7.80 7.80 0 0 1 1941.28 1006.29 L1939.65 1006.54 A6.20 6.20 0 0 1 1939.59 1006.96 L1941.06 1007.70 A7.80 7.80 0 0 1 1940.74 1008.67 L1939.12 1008.40 A6.20 6.20 0 0 1 1938.92 1008.78 L1940.10 1009.94 A7.80 7.80 0 0 1 1939.49 1010.77 L1938.03 1010.01 A6.20 6.20 0 0 1 1937.73 1010.31 L1938.49 1011.77 A7.80 7.80 0 0 1 1937.66 1012.38 L1936.50 1011.20 A6.20 6.20 0 0 1 1936.12 1011.40 L1936.39 1013.02 A7.80 7.80 0 0 1 1935.42 1013.34 L1934.68 1011.87 A6.20 6.20 0 0 1 1934.26 1011.93 L1934.01 1013.56 A7.80 7.80 0 0 1 1932.99 1013.56 L1932.74 1011.93 A6.20 6.20 0 0 1 1932.32 1011.87 L1931.58 1013.34 A7.80 7.80 0 0 1 1930.61 1013.02 L1930.88 1011.40 A6.20 6.20 0 0 1 1930.50 1011.20 L1929.34 1012.38 A7.80 7.80 0 0 1 1928.51 1011.77 L1929.27 1010.31 A6.20 6.20 0 0 1 1928.97 1010.01 L1927.51 1010.77 A7.80 7.80 0 0 1 1926.90 1009.94 L1928.08 1008.78 A6.20 6.20 0 0 1 1927.88 1008.40 L1926.26 1008.67 A7.80 7.80 0 0 1 1925.94 1007.70 L1927.41 1006.96 A6.20 6.20 0 0 1 1927.35 1006.54 L1925.72 1006.29 A7.80 7.80 0 0 1 1925.72 1005.27 L1927.35 1005.02 A6.20 6.20 0 0 1 1927.41 1004.60 L1925.94 1003.86 A7.80 7.80 0 0 1 1926.26 1002.89 L1927.88 1003.16 A6.20 6.20 0 0 1 1928.08 1002.78 L1926.90 1001.62 A7.80 7.80 0 0 1 1927.51 1000.79 L1928.97 1001.55 A6.20 6.20 0 0 1 1929.27 1001.25 L1928.51 999.79 A7.80 7.80 0 0 1 1929.34 999.18 L1930.50 1000.36 A6.20 6.20 0 0 1 1930.88 1000.16 L1930.61 998.54 A7.80 7.80 0 0 1 1931.58 998.22 L1932.32 999.69 A6.20 6.20 0 0 1 1932.74 999.63Z M1936.70 1005.78 A3.20 3.20 0 1 0 1930.30 1005.78 A3.20 3.20 0 1 0 1936.70 1005.78Z" fill="#474747" fill-rule="evenodd"/>
<path d="M1923.13 1012.09 L1923.37 1010.62 A5.00 5.00 0 0 1 1924.63 1010.62 L1924.87 1012.09 A3.60 3.60 0 0 1 1925.35 1012.24 L1926.41 1011.20 A5.00 5.00 0 0 1 1927.42 1011.94 L1926.76 1013.27 A3.60 3.60 0 0 1 1927.05 1013.67 L1928.52 1013.45 A5.00 5.00 0 0 1 1928.91 1014.64 L1927.59 1015.33 A3.60 3.60 0 0 1 1927.59 1015.83 L1928.91 1016.52 A5.00 5.00 0 0 1 1928.52 1017.71 L1927.05 1017.49 A3.60 3.60 0 0 1 1926.76 1017.89 L1927.42 1019.22 A5.00 5.00 0 0 1 1926.41 1019.96 L1925.35 1018.92 A3.60 3.60 0 0 1 1924.87 1019.07 L1924.63 1020.54 A5.00 5.00 0 0 1 1923.37 1020.54 L1923.13 1019.07 A3.60 3.60 0 0 1 1922.65 1018.92 L1921.59 1019.96 A5.00 5.00 0 0 1 1920.58 1019.22 L1921.24 1017.89 A3.60 3.60 0 0 1 1920.95 1017.49 L1919.48 1017.71 A5.00 5.00 0 0 1 1919.09 1016.52 L1920.41 1015.83 A3.60 3.60 0 0 1 1920.41 1015.33 L1919.09 1014.64 A5.00 5.00 0 0 1 1919.48 1013.45 L1920.95 1013.67 A3.60 3.60 0 0 1 1921.24 1013.27 L1920.58 1011.94 A5.00 5.00 0 0 1 1921.59 1011.20 L1922.65 1012.24 A3.60 3.60 0 0 1 1923.13 1012.09Z M1925.60 1015.58 A1.60 1.60 0 1 0 1922.40 1015.58 A1.60 1.60 0 1 0 1925.60 1015.58Z" fill="#474747" fill-rule="evenodd"/>
<path d="M1932.74 1057.55 L1932.99 1055.92 A7.80 7.80 0 0 1 1934.01 1055.92 L1934.26 1057.55 A6.20 6.20 0 0 1 1934.68 1057.61 L1935.42 1056.14 A7.80 7.80 0 0 1 1936.39 1056.46 L1936.12 1058.08 A6.20 6.20 0 0 1 1936.50 1058.28 L1937.66 1057.10 A7.80 7.80 0 0 1 1938.49 1057.71 L1937.73 1059.17 A6.20 6.20 0 0 1 1938.03 1059.47 L1939.49 1058.71 A7.80 7.80 0 0 1 1940.10 1059.54 L1938.92 1060.70 A6.20 6.20 0 0 1 1939.12 1061.08 L1940.74 1060.81 A7.80 7.80 0 0 1 1941.06 1061.78 L1939.59 1062.52 A6.20 6.20 0 0 1 1939.65 1062.94 L1941.28 1063.19 A7.80 7.80 0 0 1 1941.28 1064.21 L1939.65 1064.46 A6.20 6.20 0 0 1 1939.59 1064.88 L1941.06 1065.62 A7.80 7.80 0 0 1 1940.74 1066.59 L1939.12 1066.32 A6.20 6.20 0 0 1 1938.92 1066.70 L1940.10 1067.86 A7.80 7.80 0 0 1 1939.49 1068.69 L1938.03 1067.93 A6.20 6.20 0 0 1 1937.73 1068.23 L1938.49 1069.69 A7.80 7.80 0 0 1 1937.66 1070.30 L1936.50 1069.12 A6.20 6.20 0 0 1 1936.12 1069.32 L1936.39 1070.94 A7.80 7.80 0 0 1 1935.42 1071.26 L1934.68 1069.79 A6.20 6.20 0 0 1 1934.26 1069.85 L1934.01 1071.48 A7.80 7.80 0 0 1 1932.99 1071.48 L1932.74 1069.85 A6.20 6.20 0 0 1 1932.32 1069.79 L1931.58 1071.26 A7.80 7.80 0 0 1 1930.61 1070.94 L1930.88 1069.32 A6.20 6.20 0 0 1 1930.50 1069.12 L1929.34 1070.30 A7.80 7.80 0 0 1 1928.51 1069.69 L1929.27 1068.23 A6.20 6.20 0 0 1 1928.97 1067.93 L1927.51 1068.69 A7.80 7.80 0 0 1 1926.90 1067.86 L1928.08 1066.70 A6.20 6.20 0 0 1 1927.88 1066.32 L1926.26 1066.59 A7.80 7.80 0 0 1 1925.94 1065.62 L1927.41 1064.88 A6.20 6.20 0 0 1 1927.35 1064.46 L1925.72 1064.21 A7.80 7.80 0 0 1 1925.72 1063.19 L1927.35 1062.94 A6.20 6.20 0 0 1 1927.41 1062.52 L1925.94 1061.78 A7.80 7.80 0 0 1 1926.26 1060.81 L1927.88 1061.08 A6.20 6.20 0 0 1 1928.08 1060.70 L1926.90 1059.54 A7.80 7.80 0 0 1 1927.51 1058.71 L1928.97 1059.47 A6.20 6.20 0 0 1 1929.27 1059.17 L1928.51 1057.71 A7.80 7.80 0 0 1 1929.34 1057.10 L1930.50 1058.28 A6.20 6.20 0 0 1 1930.88 1058.08 L1930.61 1056.46 A7.80 7.80 0 0 1 1931.58 1056.14 L1932.32 1057.61 A6.20 6.20 0 0 1 1932.74 1057.55Z M1936.70 1063.70 A3.20 3.20 0 1 0 1930.30 1063.70 A3.20 3.20 0 1 0 1936.70 1063.70Z" fill="#474747" fill-rule="evenodd"/>
<path d="M1923.13 1070.01 L1923.37 1068.54 A5.00 5.00 0 0 1 1924.63 1068.54 L1924.87 1070.01 A3.60 3.60 0 0 1 1925.35 1070.16 L1926.41 1069.12 A5.00 5.00 0 0 1 1927.42 1069.86 L1926.76 1071.19 A3.60 3.60 0 0 1 1927.05 1071.59 L1928.52 1071.37 A5.00 5.00 0 0 1 1928.91 1072.56 L1927.59 1073.25 A3.60 3.60 0 0 1 1927.59 1073.75 L1928.91 1074.44 A5.00 5.00 0 0 1 1928.52 1075.63 L1927.05 1075.41 A3.60 3.60 0 0 1 1926.76 1075.81 L1927.42 1077.14 A5.00 5.00 0 0 1 1926.41 1077.88 L1925.35 1076.84 A3.60 3.60 0 0 1 1924.87 1076.99 L1924.63 1078.46 A5.00 5.00 0 0 1 1923.37 1078.46 L1923.13 1076.99 A3.60 3.60 0 0 1 1922.65 1076.84 L1921.59 1077.88 A5.00 5.00 0 0 1 1920.58 1077.14 L1921.24 1075.81 A3.60 3.60 0 0 1 1920.95 1075.41 L1919.48 1075.63 A5.00 5.00 0 0 1 1919.09 1074.44 L1920.41 1073.75 A3.60 3.60 0 0 1 1920.41 1073.25 L1919.09 1072.56 A5.00 5.00 0 0 1 1919.48 1071.37 L1920.95 1071.59 A3.60 3.60 0 0 1 1921.24 1071.19 L1920.58 1069.86 A5.00 5.00 0 0 1 1921.59 1069.12 L1922.65 1070.16 A3.60 3.60 0 0 1 1923.13 1070.01Z M1925.60 1073.50 A1.60 1.60 0 1 0 1922.40 1073.50 A1.60 1.60 0 1 0 1925.60 1073.50Z" fill="#474747" fill-rule="evenodd"/>
<path d="M1932.74 1115.47 L1932.99 1113.84 A7.80 7.80 0 0 1 1934.01 1113.84 L1934.26 1115.47 A6.20 6.20 0 0 1 1934.68 1115.53 L1935.42 1114.06 A7.80 7.80 0 0 1 1936.39 1114.38 L1936.12 1116.00 A6.20 6.20 0 0 1 1936.50 1116.20 L1937.66 1115.02 A7.80 7.80 0 0 1 1938.49 1115.63 L1937.73 1117.09 A6.20 6.20 0 0 1 1938.03 1117.39 L1939.49 1116.63 A7.80 7.80 0 0 1 1940.10 1117.46 L1938.92 1118.62 A6.20 6.20 0 0 1 1939.12 1119.00 L1940.74 1118.73 A7.80 7.80 0 0 1 1941.06 1119.70 L1939.59 1120.44 A6.20 6.20 0 0 1 1939.65 1120.86 L1941.28 1121.11 A7.80 7.80 0 0 1 1941.28 1122.13 L1939.65 1122.38 A6.20 6.20 0 0 1 1939.59 1122.80 L1941.06 1123.54 A7.80 7.80 0 0 1 1940.74 1124.51 L1939.12 1124.24 A6.20 6.20 0 0 1 1938.92 1124.62 L1940.10 1125.78 A7.80 7.80 0 0 1 1939.49 1126.61 L1938.03 1125.85 A6.20 6.20 0 0 1 1937.73 1126.15 L1938.49 1127.61 A7.80 7.80 0 0 1 1937.66 1128.22 L1936.50 1127.04 A6.20 6.20 0 0 1 1936.12 1127.24 L1936.39 1128.86 A7.80 7.80 0 0 1 1935.42 1129.18 L1934.68 1127.71 A6.20 6.20 0 0 1 1934.26 1127.77 L1934.01 1129.40 A7.80 7.80 0 0 1 1932.99 1129.40 L1932.74 1127.77 A6.20 6.20 0 0 1 1932.32 1127.71 L1931.58 1129.18 A7.80 7.80 0 0 1 1930.61 1128.86 L1930.88 1127.24 A6.20 6.20 0 0 1 1930.50 1127.04 L1929.34 1128.22 A7.80 7.80 0 0 1 1928.51 1127.61 L1929.27 1126.15 A6.20 6.20 0 0 1 1928.97 1125.85 L1927.51 1126.61 A7.80 7.80 0 0 1 1926.90 1125.78 L1928.08 1124.62 A6.20 6.20 0 0 1 1927.88 1124.24 L1926.26 1124.51 A7.80 7.80 0 0 1 1925.94 1123.54 L1927.41 1122.80 A6.20 6.20 0 0 1 1927.35 1122.38 L1925.72 1122.13 A7.80 7.80 0 0 1 1925.72 1121.11 L1927.35 1120.86 A6.20 6.20 0 0 1 1927.41 1120.44 L1925.94 1119.70 A7.80 7.80 0 0 1 1926.26 1118.73 L1927.88 1119.00 A6.20 6.20 0 0 1 1928.08 1118.62 L1926.90 1117.46 A7.80 7.80 0 0 1 1927.51 1116.63 L1928.97 1117.39 A6.20 6.20 0 0 1 1929.27 1117.09 L1928.51 1115.63 A7.80 7.80 0 0 1 1929.34 1115.02 L1930.50 1116.20 A6.20 6.20 0 0 1 1930.88 1116.00 L1930.61 1114.38 A7.80 7.80 0 0 1 1931.58 1114.06 L1932.32 1115.53 A6.20 6.20 0 0 1 1932.74 1115.47Z M1936.70 1121.62 A3.20 3.20 0 1 0 1930.30 1121.62 A3.20 3.20 0 1 0 1936.70 1121.62Z" fill="#474747" fill-rule="evenodd"/>
<path d="M1923.13 1127.93 L1923.37 1126.46 A5.00 5.00 0 0 1 1924.63 1126.46 L1924.87 1127.93 A3.60 3.60 0 0 1 1925.35 1128.08 L1926.41 1127.04 A5.00 5.00 0 0 1 1927.42 1127.78 L1926.76 1129.11 A3.60 3.60 0 0 1 1927.05 1129.51 L1928.52 1129.29 A5.00 5.00 0 0 1 1928.91 1130.48 L1927.59 1131.17 A3.60 3.60 0 0 1 1927.59 1131.67 L1928.91 1132.36 A5.00 5.00 0 0 1 1928.52 1133.55 L1927.05 1133.33 A3.60 3.60 0 0 1 1926.76 1133.73 L1927.42 1135.06 A5.00 5.00 0 0 1 1926.41 1135.80 L1925.35 1134.76 A3.60 3.60 0 0 1 1924.87 1134.91 L1924.63 1136.38 A5.00 5.00 0 0 1 1923.37 1136.38 L1923.13 1134.91 A3.60 3.60 0 0 1 1922.65 1134.76 L1921.59 1135.80 A5.00 5.00 0 0 1 1920.58 1135.06 L1921.24 1133.73 A3.60 3.60 0 0 1 1920.95 1133.33 L1919.48 1133.55 A5.00 5.00 0 0 1 1919.09 1132.36 L1920.41 1131.67 A3.60 3.60 0 0 1 1920.41 1131.17 L1919.09 1130.48 A5.00 5.00 0 0 1 1919.48 1129.29 L1920.95 1129.51 A3.60 3.60 0 0 1 1921.24 1129.11 L1920.58 1127.78 A5.00 5.00 0 0 1 1921.59 1127.04 L1922.65 1128.08 A3.60 3.60 0 0 1 1923.13 1127.93Z M1925.60 1131.42 A1.60 1.60 0 1 0 1922.40 1131.42 A1.60 1.60 0 1 0 1925.60 1131.42Z" fill="#474747" fill-rule="evenodd"/>
<path d="M1932.74 1173.39 L1932.99 1171.76 A7.80 7.80 0 0 1 1934.01 1171.76 L1934.26 1173.39 A6.20 6.20 0 0 1 1934.68 1173.45 L1935.42 1171.98 A7.80 7.80 0 0 1 1936.39 1172.30 L1936.12 1173.92 A6.20 6.20 0 0 1 1936.50 1174.12 L1937.66 1172.94 A7.80 7.80 0 0 1 1938.49 1173.55 L1937.73 1175.01 A6.20 6.20 0 0 1 1938.03 1175.31 L1939.49 1174.55 A7.80 7.80 0 0 1 1940.10 1175.38 L1938.92 1176.54 A6.20 6.20 0 0 1 1939.12 1176.92 L1940.74 1176.65 A7.80 7.80 0 0 1 1941.06 1177.62 L1939.59 1178.36 A6.20 6.20 0 0 1 1939.65 1178.78 L1941.28 1179.03 A7.80 7.80 0 0 1 1941.28 1180.05 L1939.65 1180.30 A6.20 6.20 0 0 1 1939.59 1180.72 L1941.06 1181.46 A7.80 7.80 0 0 1 1940.74 1182.43 L1939.12 1182.16 A6.20 6.20 0 0 1 1938.92 1182.54 L1940.10 1183.70 A7.80 7.80 0 0 1 1939.49 1184.53 L1938.03 1183.77 A6.20 6.20 0 0 1 1937.73 1184.07 L1938.49 1185.53 A7.80 7.80 0 0 1 1937.66 1186.14 L1936.50 1184.96 A6.20 6.20 0 0 1 1936.12 1185.16 L1936.39 1186.78 A7.80 7.80 0 0 1 1935.42 1187.10 L1934.68 1185.63 A6.20 6.20 0 0 1 1934.26 1185.69 L1934.01 1187.32 A7.80 7.80 0 0 1 1932.99 1187.32 L1932.74 1185.69 A6.20 6.20 0 0 1 1932.32 1185.63 L1931.58 1187.10 A7.80 7.80 0 0 1 1930.61 1186.78 L1930.88 1185.16 A6.20 6.20 0 0 1 1930.50 1184.96 L1929.34 1186.14 A7.80 7.80 0 0 1 1928.51 1185.53 L1929.27 1184.07 A6.20 6.20 0 0 1 1928.97 1183.77 L1927.51 1184.53 A7.80 7.80 0 0 1 1926.90 1183.70 L1928.08 1182.54 A6.20 6.20 0 0 1 1927.88 1182.16 L1926.26 1182.43 A7.80 7.80 0 0 1 1925.94 1181.46 L1927.41 1180.72 A6.20 6.20 0 0 1 1927.35 1180.30 L1925.72 1180.05 A7.80 7.80 0 0 1 1925.72 1179.03 L1927.35 1178.78 A6.20 6.20 0 0 1 1927.41 1178.36 L1925.94 1177.62 A7.80 7.80 0 0 1 1926.26 1176.65 L1927.88 1176.92 A6.20 6.20 0 0 1 1928.08 1176.54 L1926.90 1175.38 A7.80 7.80 0 0 1 1927.51 1174.55 L1928.97 1175.31 A6.20 6.20 0 0 1 1929.27 1175.01 L1928.51 1173.55 A7.80 7.80 0 0 1 1929.34 1172.94 L1930.50 1174.12 A6.20 6.20 0 0 1 1930.88 1173.92 L1930.61 1172.30 A7.80 7.80 0 0 1 1931.58 1171.98 L1932.32 1173.45 A6.20 6.20 0 0 1 1932.74 1173.39Z M1936.70 1179.54 A3.20 3.20 0 1 0 1930.30 1179.54 A3.20 3.20 0 1 0 1936.70 1179.54Z" fill="#474747" fill-rule="evenodd"/>
<path d="M1923.13 1185.85 L1923.37 1184.38 A5.00 5.00 0 0 1 1924.63 1184.38 L1924.87 1185.85 A3.60 3.60 0 0 1 1925.35 1186.00 L1926.41 1184.96 A5.00 5.00 0 0 1 1927.42 1185.70 L1926.76 1187.03 A3.60 3.60 0 0 1 1927.05 1187.43 L1928.52 1187.21 A5.00 5.00 0 0 1 1928.91 1188.40 L1927.59 1189.09 A3.60 3.60 0 0 1 1927.59 1189.59 L1928.91 1190.28 A5.00 5.00 0 0 1 1928.52 1191.47 L1927.05 1191.25 A3.60 3.60 0 0 1 1926.76 1191.65 L1927.42 1192.98 A5.00 5.00 0 0 1 1926.41 1193.72 L1925.35 1192.68 A3.60 3.60 0 0 1 1924.87 1192.83 L1924.63 1194.30 A5.00 5.00 0 0 1 1923.37 1194.30 L1923.13 1192.83 A3.60 3.60 0 0 1 1922.65 1192.68 L1921.59 1193.72 A5.00 5.00 0 0 1 1920.58 1192.98 L1921.24 1191.65 A3.60 3.60 0 0 1 1920.95 1191.25 L1919.48 1191.47 A5.00 5.00 0 0 1 1919.09 1190.28 L1920.41 1189.59 A3.60 3.60 0 0 1 1920.41 1189.09 L1919.09 1188.40 A5.00 5.00 0 0 1 1919.48 1187.21 L1920.95 1187.43 A3.60 3.60 0 0 1 1921.24 1187.03 L1920.58 1185.70 A5.00 5.00 0 0 1 1921.59 1184.96 L1922.65 1186.00 A3.60 3.60 0 0 1 1923.13 1185.85Z M1925.60 1189.34 A1.60 1.60 0 1 0 1922.40 1189.34 A1.60 1.60 0 1 0 1925.60 1189.34Z" fill="#474747" fill-rule="evenodd"/>
</svg>
<span class="t" style="left:52.38px;top:18.91px;font-size:32px;transform:scaleX(0.9097);color:#fff;font-style:italic;">Sensor</span>
<span class="t" style="left:154.43px;top:19.74px;font-size:31.5px;transform:scaleX(1.0114);color:#fff;-webkit-text-stroke:1.1px #fff;">Physical Disk: dm-2</span>
<span class="t" style="left:92.13px;top:62.39px;font-size:19.5px;transform:scaleX(0.9504);color:#fff;">OK</span>
<span class="t" style="left:147.55px;top:142.17px;font-size:25.2px;transform:scaleX(0.9576);color:#555555;-webkit-text-stroke:0.45px #555555;">Overview</span>
<span class="t" style="left:406.35px;top:142.17px;font-size:25.2px;transform:scaleX(0.9421);color:#555555;">Live Data</span>
<span class="t" style="left:637.06px;top:142.17px;font-size:25.2px;transform:scaleX(1.0642);color:#555555;font-weight:bold;">2</span>
<span class="t" style="left:667.57px;top:142.17px;font-size:25.2px;transform:scaleX(0.9777);color:#555555;">days</span>
<span class="t" style="left:842.01px;top:142.17px;font-size:25.2px;transform:scaleX(1.0261);color:#555555;font-weight:bold;">30</span>
<span class="t" style="left:879.17px;top:142.17px;font-size:25.2px;transform:scaleX(0.9777);color:#555555;">days</span>
<span class="t" style="left:1050.72px;top:142.17px;font-size:25.2px;transform:scaleX(1.0065);color:#555555;font-weight:bold;">365</span>
<span class="t" style="left:1099.66px;top:142.17px;font-size:25.2px;transform:scaleX(0.9835);color:#555555;">days</span>
<span class="t" style="left:1311.85px;top:142.17px;font-size:25.2px;transform:scaleX(0.9915);color:#555555;">Historic Data</span>
<span class="t" style="left:1611.87px;top:142.17px;font-size:25.2px;transform:scaleX(1.0329);color:#555555;">Log</span>
<span class="t" style="left:1807.68px;top:142.17px;font-size:25.2px;transform:scaleX(0.9914);color:#555555;">Settings</span>
<span class="t" style="left:2054.54px;top:142.17px;font-size:25.2px;transform:scaleX(1.0452);color:#555555;">Notifications</span>
<span class="t" style="left:72.99px;top:214.71px;font-size:22.2px;transform:scaleX(0.9811);color:#555555;-webkit-text-stroke:0.45px #555555;">Bytes Read</span>
<span class="t" style="left:73.52px;top:536.23px;font-size:23px;transform:scaleX(0.9642);color:#555555;-webkit-text-stroke:0.45px #555555;">0 GB/s</span>
<span class="t" style="left:292.04px;top:521.90px;font-size:20.2px;transform:scaleX(0.9699);color:#555555;">0 GB/s</span>
<span class="t" style="left:451.63px;top:521.90px;font-size:20.2px;transform:scaleX(0.9776);color:#555555;">&lt; 0.01 GB/s</span>
<span class="t" style="left:601.28px;top:214.71px;font-size:17px;transform:scaleX(1.0728);color:#555555;-webkit-text-stroke:0.45px #555555;">Bytes Written</span>
<span class="t" style="left:601.41px;top:290.34px;font-size:17.2px;transform:scaleX(1.0283);color:#555555;-webkit-text-stroke:0.45px #555555;">&lt; 0.01 GB/s</span>
<span class="t" style="left:866.70px;top:214.71px;font-size:17px;transform:scaleX(1.0590);color:#555555;-webkit-text-stroke:0.45px #555555;">Load Average (1 Minute)</span>
<span class="t" style="left:867.24px;top:290.34px;font-size:17.2px;transform:scaleX(0.9481);color:#555555;-webkit-text-stroke:0.45px #555555;">13 %</span>
<span class="t" style="left:1131.70px;top:214.71px;font-size:17px;transform:scaleX(1.0619);color:#555555;-webkit-text-stroke:0.45px #555555;">Load Average (15 Minutes)</span>
<span class="t" style="left:1132.24px;top:290.34px;font-size:17.2px;transform:scaleX(0.9481);color:#555555;-webkit-text-stroke:0.45px #555555;">13 %</span>
<span class="t" style="left:1396.70px;top:214.71px;font-size:17px;transform:scaleX(1.0621);color:#555555;-webkit-text-stroke:0.45px #555555;">Load Average (5 Minutes)</span>
<span class="t" style="left:1397.24px;top:290.34px;font-size:17.2px;transform:scaleX(0.9481);color:#555555;-webkit-text-stroke:0.45px #555555;">13 %</span>
<span class="t" style="left:1661.72px;top:214.71px;font-size:17px;transform:scaleX(1.0508);color:#555555;-webkit-text-stroke:0.45px #555555;">Read Accesses</span>
<span class="t" style="left:1662.43px;top:290.34px;font-size:17.2px;transform:scaleX(1.1185);color:#555555;-webkit-text-stroke:0.45px #555555;">0 #/s</span>
<span class="t" style="left:602.91px;top:340.91px;font-size:17px;transform:scaleX(1.0558);color:#555555;-webkit-text-stroke:0.45px #555555;">Write Accesses</span>
<span class="t" style="left:602.01px;top:416.34px;font-size:17.2px;transform:scaleX(1.1061);color:#555555;-webkit-text-stroke:0.45px #555555;">66 #/s</span>
<span class="t" style="left:107.86px;top:684.53px;font-size:23px;transform:scaleX(0.9538);color:#0b0b38;-webkit-text-stroke:0.45px #0b0b38;">Channel</span>
<span class="t" style="left:519.05px;top:684.53px;font-size:23px;transform:scaleX(0.9120);color:#0b0b38;-webkit-text-stroke:0.45px #0b0b38;">ID</span>
<span class="t" style="left:656.59px;top:684.53px;font-size:23px;transform:scaleX(0.9996);color:#0b0b38;-webkit-text-stroke:0.45px #0b0b38;">Last Value</span>
<span class="t" style="left:643.14px;top:710.83px;font-size:23px;transform:scaleX(1.0105);color:#0b0b38;-webkit-text-stroke:0.45px #0b0b38;">(Volume)</span>
<span class="t" style="left:852.30px;top:684.53px;font-size:23px;transform:scaleX(0.9958);color:#0b0b38;-webkit-text-stroke:0.45px #0b0b38;">Last Value</span>
<span class="t" style="left:851.90px;top:710.83px;font-size:23px;transform:scaleX(0.9703);color:#0b0b38;-webkit-text-stroke:0.45px #0b0b38;">(Speed)</span>
<span class="t" style="left:1258.03px;top:684.53px;font-size:23px;transform:scaleX(1.0362);color:#0b0b38;-webkit-text-stroke:0.45px #0b0b38;">Minimum</span>
<span class="t" style="left:1674.95px;top:684.53px;font-size:23px;transform:scaleX(1.0256);color:#0b0b38;-webkit-text-stroke:0.45px #0b0b38;">Maximum</span>
<span class="t" style="left:106.81px;top:769.00px;font-size:22.8px;transform:scaleX(0.9553);color:#555555;">Bytes Read</span>
<span class="t" style="left:553.89px;top:769.00px;font-size:22.8px;transform:scaleX(0.9000);color:#555555;">1</span>
<span class="t" style="left:715.69px;top:769.00px;font-size:22.8px;transform:scaleX(0.9106);color:#555555;">0 GB</span>
<span class="t" style="left:889.73px;top:769.00px;font-size:22.8px;transform:scaleX(0.9826);color:#555555;">0 GB/s</span>
<span class="t" style="left:1312.33px;top:769.00px;font-size:22.8px;transform:scaleX(0.9826);color:#555555;">0 GB/s</span>
<span class="t" style="left:1686.62px;top:769.00px;font-size:22.8px;transform:scaleX(0.9656);color:#555555;">&lt; 0.01 GB/s</span>
<span class="t" style="left:106.75px;top:826.92px;font-size:22.8px;transform:scaleX(0.9887);color:#555555;">Bytes Written</span>
<span class="t" style="left:554.47px;top:826.92px;font-size:22.8px;transform:scaleX(1.0765);color:#555555;">2</span>
<span class="t" style="left:684.57px;top:826.92px;font-size:22.8px;transform:scaleX(0.9381);color:#555555;">0.85 GB</span>
<span class="t" style="left:841.32px;top:826.92px;font-size:22.8px;transform:scaleX(0.9656);color:#555555;">&lt; 0.01 GB/s</span>
<span class="t" style="left:1263.92px;top:826.92px;font-size:22.8px;transform:scaleX(0.9656);color:#555555;">&lt; 0.01 GB/s</span>
<span class="t" style="left:1686.62px;top:826.92px;font-size:22.8px;transform:scaleX(0.9656);color:#555555;">&lt; 0.01 GB/s</span>
<span class="t" style="left:106.71px;top:884.84px;font-size:22.8px;transform:scaleX(1.0123);color:#555555;">Downtime</span>
<span class="t" style="left:547.61px;top:884.84px;font-size:22.8px;transform:scaleX(0.9832);color:#555555;">-4</span>
<span class="t" style="left:106.76px;top:942.76px;font-size:22.8px;transform:scaleX(0.9823);color:#555555;">Load Average (1 Minute)</span>
<span class="t" style="left:555.08px;top:942.76px;font-size:22.8px;transform:scaleX(1.0079);color:#555555;">5</span>
<span class="t" style="left:715.32px;top:942.76px;font-size:22.8px;transform:scaleX(0.9104);color:#555555;">13 %</span>
<span class="t" style="left:1346.42px;top:942.76px;font-size:22.8px;transform:scaleX(0.8722);color:#555555;">0 %</span>
<span class="t" style="left:1756.31px;top:942.76px;font-size:22.8px;transform:scaleX(0.9066);color:#555555;">37 %</span>
<span class="t" style="left:106.76px;top:1000.68px;font-size:22.8px;transform:scaleX(0.9832);color:#555555;">Load Average (15 Minutes)</span>
<span class="t" style="left:554.78px;top:1000.68px;font-size:22.8px;transform:scaleX(1.0500);color:#555555;">7</span>
<span class="t" style="left:715.32px;top:1000.68px;font-size:22.8px;transform:scaleX(0.9104);color:#555555;">13 %</span>
<span class="t" style="left:1346.42px;top:1000.68px;font-size:22.8px;transform:scaleX(0.8722);color:#555555;">0 %</span>
<span class="t" style="left:1756.06px;top:1000.68px;font-size:22.8px;transform:scaleX(0.9116);color:#555555;">21 %</span>
<span class="t" style="left:106.76px;top:1058.60px;font-size:22.8px;transform:scaleX(0.9819);color:#555555;">Load Average (5 Minutes)</span>
<span class="t" style="left:554.79px;top:1058.60px;font-size:22.8px;transform:scaleX(1.0363);color:#555555;">6</span>
<span class="t" style="left:715.32px;top:1058.60px;font-size:22.8px;transform:scaleX(0.9104);color:#555555;">13 %</span>
<span class="t" style="left:1346.42px;top:1058.60px;font-size:22.8px;transform:scaleX(0.8722);color:#555555;">0 %</span>
<span class="t" style="left:1756.06px;top:1058.60px;font-size:22.8px;transform:scaleX(0.9116);color:#555555;">23 %</span>
<span class="t" style="left:106.78px;top:1116.52px;font-size:22.8px;transform:scaleX(0.9757);color:#555555;">Read Accesses</span>
<span class="t" style="left:554.45px;top:1116.52px;font-size:22.8px;transform:scaleX(0.9802);color:#555555;">3</span>
<span class="t" style="left:730.61px;top:1116.52px;font-size:22.8px;transform:scaleX(1.0034);color:#555555;">0 #</span>
<span class="t" style="left:905.25px;top:1116.52px;font-size:22.8px;transform:scaleX(1.0727);color:#555555;">0 #/s</span>
<span class="t" style="left:1327.85px;top:1116.52px;font-size:22.8px;transform:scaleX(1.0727);color:#555555;">0 #/s</span>
<span class="t" style="left:1666.68px;top:1116.52px;font-size:22.8px;transform:scaleX(0.9902);color:#555555;">4,772,238 #/s</span>
<span class="t" style="left:108.51px;top:1174.44px;font-size:22.8px;transform:scaleX(0.9832);color:#555555;">Write Accesses</span>
<span class="t" style="left:554.56px;top:1174.44px;font-size:22.8px;transform:scaleX(1.0262);color:#555555;">4</span>
<span class="t" style="left:676.70px;top:1174.44px;font-size:22.8px;transform:scaleX(0.9847);color:#555555;">59,011 #</span>
<span class="t" style="left:892.67px;top:1174.44px;font-size:22.8px;transform:scaleX(1.0562);color:#555555;">66 #/s</span>
<span class="t" style="left:1315.45px;top:1174.44px;font-size:22.8px;transform:scaleX(1.0533);color:#555555;">42 #/s</span>
<span class="t" style="left:1666.68px;top:1174.44px;font-size:22.8px;transform:scaleX(0.9902);color:#555555;">4,756,622 #/s</span>
</div>
</body></html>
